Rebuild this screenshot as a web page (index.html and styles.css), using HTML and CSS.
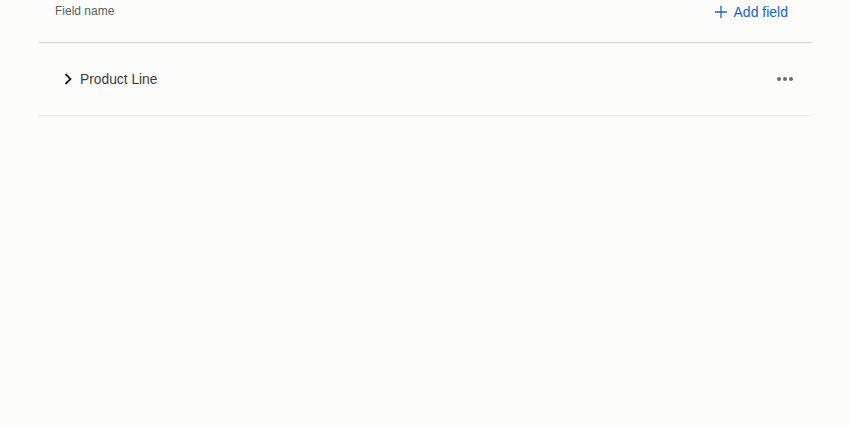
FILE: index.html
```html
<!DOCTYPE html>
<html lang="en">
<head>
<meta charset="utf-8">
<link rel="stylesheet" href="styles.css">
</head>
<body>
<div class="panel">
  <div class="header">
    <span class="col-label">Field name</span>
    <button class="add-btn" type="button">
      <svg class="plus" width="12" height="12" viewBox="0 0 12 12" aria-hidden="true">
        <path d="M6 0v12M0 6h12" stroke="currentColor" stroke-width="1.3" fill="none"/>
      </svg>
      <span>Add field</span>
    </button>
  </div>
  <div class="row">
    <svg class="chevron" width="8" height="12" viewBox="0 0 8 12" aria-hidden="true">
      <path d="M1.5 1l5 5-5 5" stroke="currentColor" stroke-width="1.8" fill="none"/>
    </svg>
    <span class="row-label">Product Line</span>
    <span class="more" aria-label="More">
      <i></i><i></i><i></i>
    </span>
  </div>
</div>
</body>
</html>
```

FILE: styles.css
```css
html, body {
  margin: 0;
  padding: 0;
  background: #fcfcfa;
  font-family: "Liberation Sans", Arial, sans-serif;
}
.panel {
  margin: 0 37px 0 39px;
}
.header {
  height: 42px;
  border-bottom: 1px solid #d5d7d9;
  display: flex;
  justify-content: space-between;
  align-items: flex-start;
  padding: 0 25px 0 16px;
}
.col-label {
  font-size: 12px;
  color: #5b5e61;
  margin-top: 4px;
}
.add-btn {
  display: flex;
  align-items: center;
  gap: 7px;
  background: none;
  border: 0;
  padding: 0;
  margin-top: 4px;
  font: inherit;
  font-size: 14px;
  color: #1d63c2;
  cursor: pointer;
}
.row {
  height: 72px;
  border-bottom: 1px solid #ebebea;
  display: flex;
  align-items: center;
  padding: 0 20px 0 25px;
}
.chevron {
  color: #1d1d1d;
  margin-right: 8px;
}
.row-label {
  font-size: 13.8px;
  color: #3a3d40;
  flex: 1;
}
.more {
  display: flex;
  gap: 2px;
}
.more i {
  width: 4px;
  height: 4px;
  border-radius: 50%;
  background: #6a6d70;
}
```
